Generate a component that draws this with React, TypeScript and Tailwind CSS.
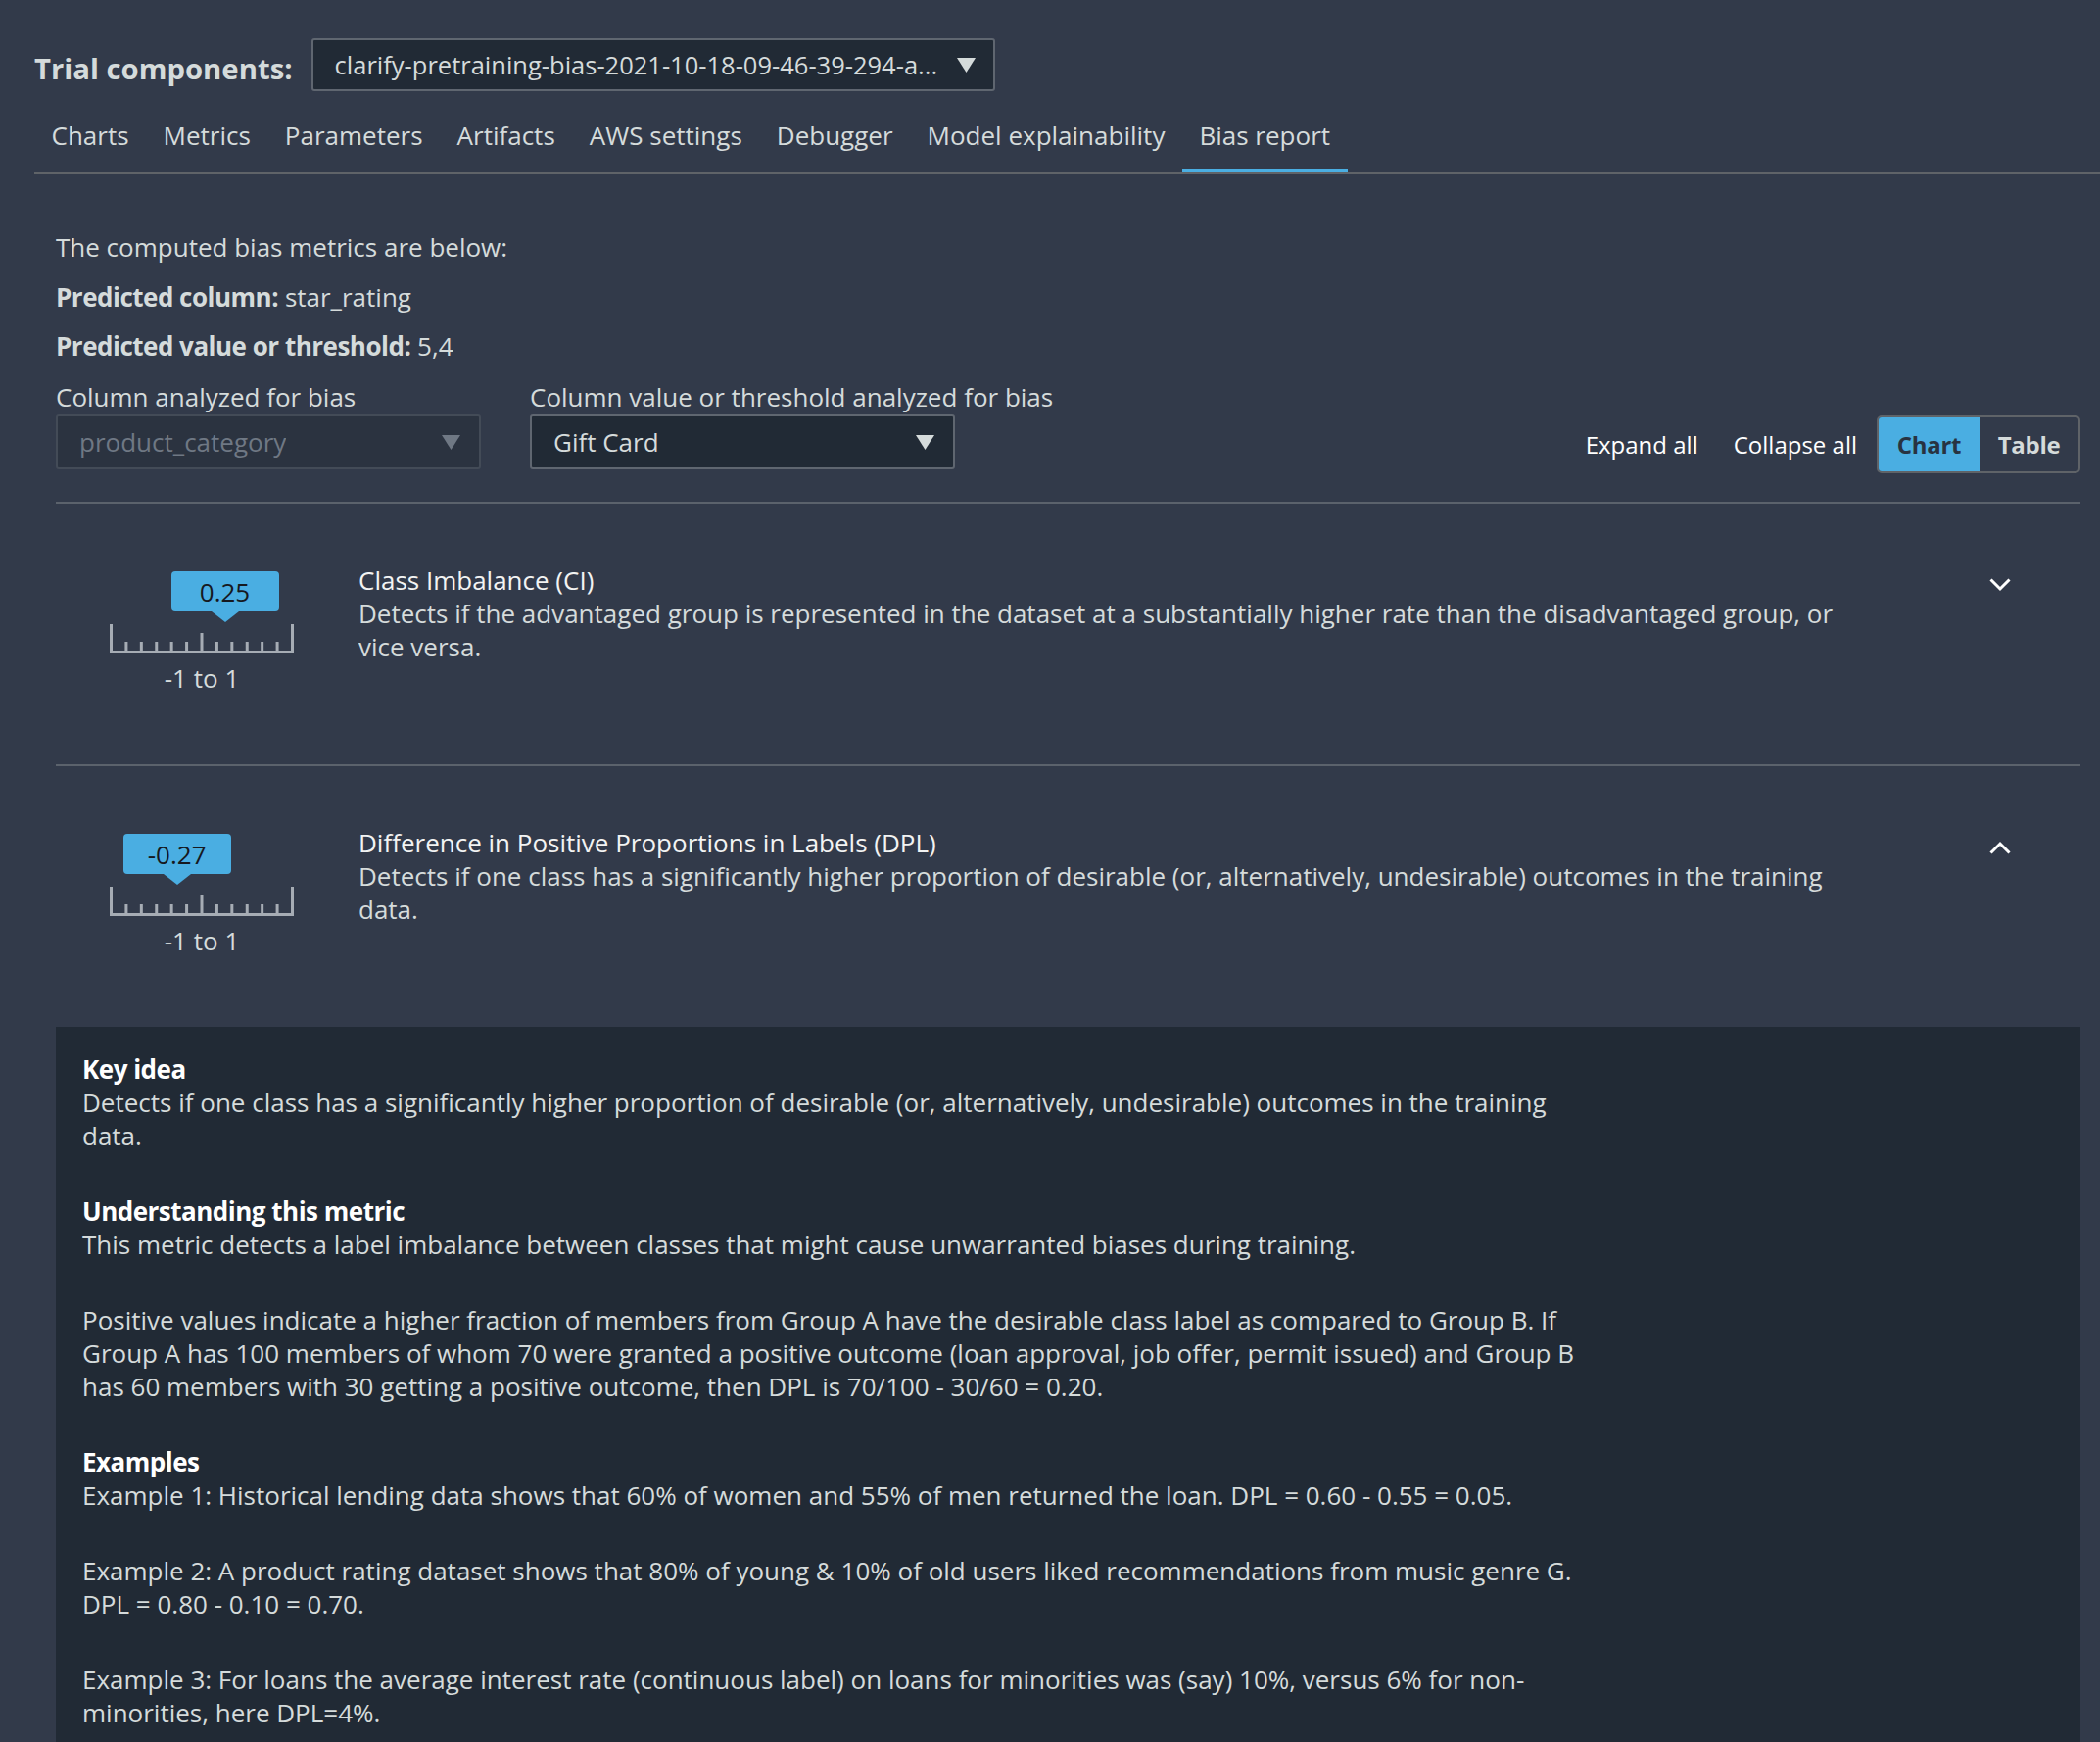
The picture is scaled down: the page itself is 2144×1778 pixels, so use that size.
import { ReactNode } from "react"

const tabs = [
  "Charts",
  "Metrics",
  "Parameters",
  "Artifacts",
  "AWS settings",
  "Debugger",
  "Model explainability",
  "Bias report",
]

function Caret({ muted }: { muted?: boolean }) {
  return (
    <svg width="19" height="15" viewBox="0 0 19 15" className="shrink-0">
      <polygon points="0,0 19,0 9.5,15" fill={muted ? "#6f7884" : "#d5dbdb"} />
    </svg>
  )
}

function Select({ value, disabled, className }: { value: string; disabled?: boolean; className?: string }) {
  return (
    <div
      className={
        "flex h-[56px] items-center justify-between rounded-[3px] border-2 pl-[22px] pr-[19px] " +
        (disabled
          ? "border-[#434b57] bg-[#2b3340] text-[#6f7884]"
          : "border-[#5f6670] bg-[#212a35] text-[#d5dbdb]") +
        " " +
        (className ?? "")
      }
    >
      <span className="truncate">{value}</span>
      <Caret muted={disabled} />
    </div>
  )
}

function Ruler() {
  const ticks = Array.from({ length: 13 }, (_, i) => 1.5 + (i * 185) / 12)
  return (
    <svg width="188" height="30" viewBox="0 0 188 30" className="block">
      {ticks.map((x, i) => {
        const top = i === 0 || i === 12 ? 0 : i === 6 ? 9 : 18
        return <line key={i} x1={x} y1={top} x2={x} y2={30} stroke="#a6acb4" strokeWidth="3" />
      })}
      <line x1="0" y1="28.5" x2="188" y2="28.5" stroke="#a6acb4" strokeWidth="3" />
    </svg>
  )
}

function Gauge({ value }: { value: number }) {
  const x = ((value + 1) / 2) * 188
  return (
    <div className="flex w-[298px] shrink-0 flex-col items-center pt-[8px]">
      <div className="relative w-[188px] pt-[54px]">
        <div className="absolute top-0 flex flex-col items-center" style={{ left: x - 55 }}>
          <div className="flex h-[41px] w-[110px] items-center justify-center rounded-[4px] bg-[#4aaee2] text-[#16191f]">
            {value.toFixed(2)}
          </div>
          <svg width="28" height="11" viewBox="0 0 28 11" className="block">
            <polygon points="0,0 28,0 14,11" fill="#4aaee2" />
          </svg>
        </div>
        <Ruler />
      </div>
      <div className="mt-[8px] text-[#d5dbdb]">-1 to 1</div>
    </div>
  )
}

function Chevron({ up }: { up?: boolean }) {
  return (
    <svg width="22" height="14" viewBox="0 0 22 14" className="block">
      <polyline
        points={up ? "1.5,12.5 11,3 20.5,12.5" : "1.5,1.5 11,11 20.5,1.5"}
        fill="none"
        stroke="#ffffff"
        strokeWidth="3"
      />
    </svg>
  )
}

function MetricRow({
  value,
  title,
  description,
  open,
  divider,
}: {
  value: number
  title: string
  description: string
  open?: boolean
  divider?: boolean
}) {
  return (
    <div className={"flex pb-[71px] pt-[61px] " + (divider ? "border-b-2 border-[#5b626c]" : "")}>
      <Gauge value={value} />
      <div className="ml-[11px] max-w-[1534px] flex-1">
        <div className="text-[#f2f3f3]">{title}</div>
        <div className="text-[#d5dbdb]">{description}</div>
      </div>
      <div className="ml-auto mr-[71px] pt-[15px]">
        <Chevron up={open} />
      </div>
    </div>
  )
}

function Block({ heading, children, first }: { heading?: string; children: ReactNode; first?: boolean }) {
  return (
    <div className={first ? "" : "mt-[43px]"}>
      {heading && <div className="font-bold tracking-[-0.5px] text-white">{heading}</div>}
      {children}
    </div>
  )
}

export default function App() {
  return (
    <div className="min-h-screen bg-[#323a4a] font-['Open_Sans',sans-serif] text-[26px] leading-[34px] text-[#d5dbdb]">
      <div className="pl-[35px] pt-[39px]">
        <div className="flex items-center">
          <h1 className="pt-[8px] text-[29.3px] font-bold leading-[40px] text-[#d5dbdb]">Trial components:</h1>
          <div className="ml-[19px] flex h-[54px] w-[698px] items-center justify-between rounded-[3px] border-2 border-[#5f6670] bg-[#212a35] pl-[22px] pr-[18px] text-[25.5px]">
            <span>clarify-pretraining-bias-2021-10-18-09-46-39-294-a...</span>
            <Caret />
          </div>
        </div>
        <nav className="mt-[19px] flex border-b-2 border-[#5f6368]">
          {tabs.map((t) => (
            <div
              key={t}
              className={
                "border-b-[3px] px-[17.5px] pb-[18px] pt-[9px] " +
                (t === "Bias report" ? "border-[#4aaee2]" : "border-transparent")
              }
            >
              {t}
            </div>
          ))}
        </nav>
      </div>

      <div className="pl-[57px] pr-[20px]">
        <div className="mt-[57px]">The computed bias metrics are below:</div>
        <div className="mt-[17px]">
          <span className="font-bold tracking-[-0.5px]">Predicted column:</span> star_rating
        </div>
        <div className="mt-[16px]">
          <span className="font-bold tracking-[-0.5px]">Predicted value or threshold:</span> 5,4
        </div>

        <div className="flex items-end justify-between border-b-2 border-[#5b626c] pb-[33px]">
          <div className="flex gap-[50px]">
            <div className="mt-[18px]">
              <div className="mb-[1px]">Column analyzed for bias</div>
              <Select value="product_category" disabled className="w-[434px]" />
            </div>
            <div className="mt-[18px]">
              <div className="mb-[1px]">Column value or threshold analyzed for bias</div>
              <Select value="Gift Card" className="w-[434px]" />
            </div>
          </div>
          <div className="mb-[-4px] flex items-center text-[24px]">
            <button className="mr-[36px] text-white">Expand all</button>
            <button className="mr-[20px] text-white">Collapse all</button>
            <div className="flex h-[59px] overflow-hidden rounded-[5px] border-2 border-[#5f6368] font-bold tracking-[-0.3px]">
              <div className="flex w-[103px] items-center justify-center bg-[#4aaee2] text-[#283341]">Chart</div>
              <div className="flex w-[101px] items-center justify-center text-[#d5dbdb]">Table</div>
            </div>
          </div>
        </div>

        <MetricRow
          value={0.25}
          title="Class Imbalance (CI)"
          description="Detects if the advantaged group is represented in the dataset at a substantially higher rate than the disadvantaged group, or vice versa."
          divider
        />
        <MetricRow
          value={-0.27}
          title="Difference in Positive Proportions in Labels (DPL)"
          description="Detects if one class has a significantly higher proportion of desirable (or, alternatively, undesirable) outcomes in the training data."
          open
        />

        <div className="min-h-[740px] bg-[#212a35] px-[27px] pb-[40px] pt-[26px]">
          <div className="max-w-[1550px]">
            <Block heading="Key idea" first>
              Detects if one class has a significantly higher proportion of desirable (or, alternatively, undesirable) outcomes in the training data.
            </Block>
            <Block heading="Understanding this metric">
              This metric detects a label imbalance between classes that might cause unwarranted biases during training.
            </Block>
            <Block>
              Positive values indicate a higher fraction of members from Group A have the desirable class label as compared to Group B. If Group A has 100 members of whom 70 were granted a positive outcome (loan approval, job offer, permit issued) and Group B has 60 members with 30 getting a positive outcome, then DPL is 70/100 - 30/60 = 0.20.
            </Block>
            <Block heading="Examples">
              Example 1: Historical lending data shows that 60% of women and 55% of men returned the loan. DPL = 0.60 - 0.55 = 0.05.
            </Block>
            <Block>
              Example 2: A product rating dataset shows that 80% of young &amp; 10% of old users liked recommendations from music genre G. DPL = 0.80 - 0.10 = 0.70.
            </Block>
            <Block>
              Example 3: For loans the average interest rate (continuous label) on loans for minorities was (say) 10%, versus 6% for non-minorities, here DPL=4%.
            </Block>
          </div>
        </div>
      </div>
    </div>
  )
}
